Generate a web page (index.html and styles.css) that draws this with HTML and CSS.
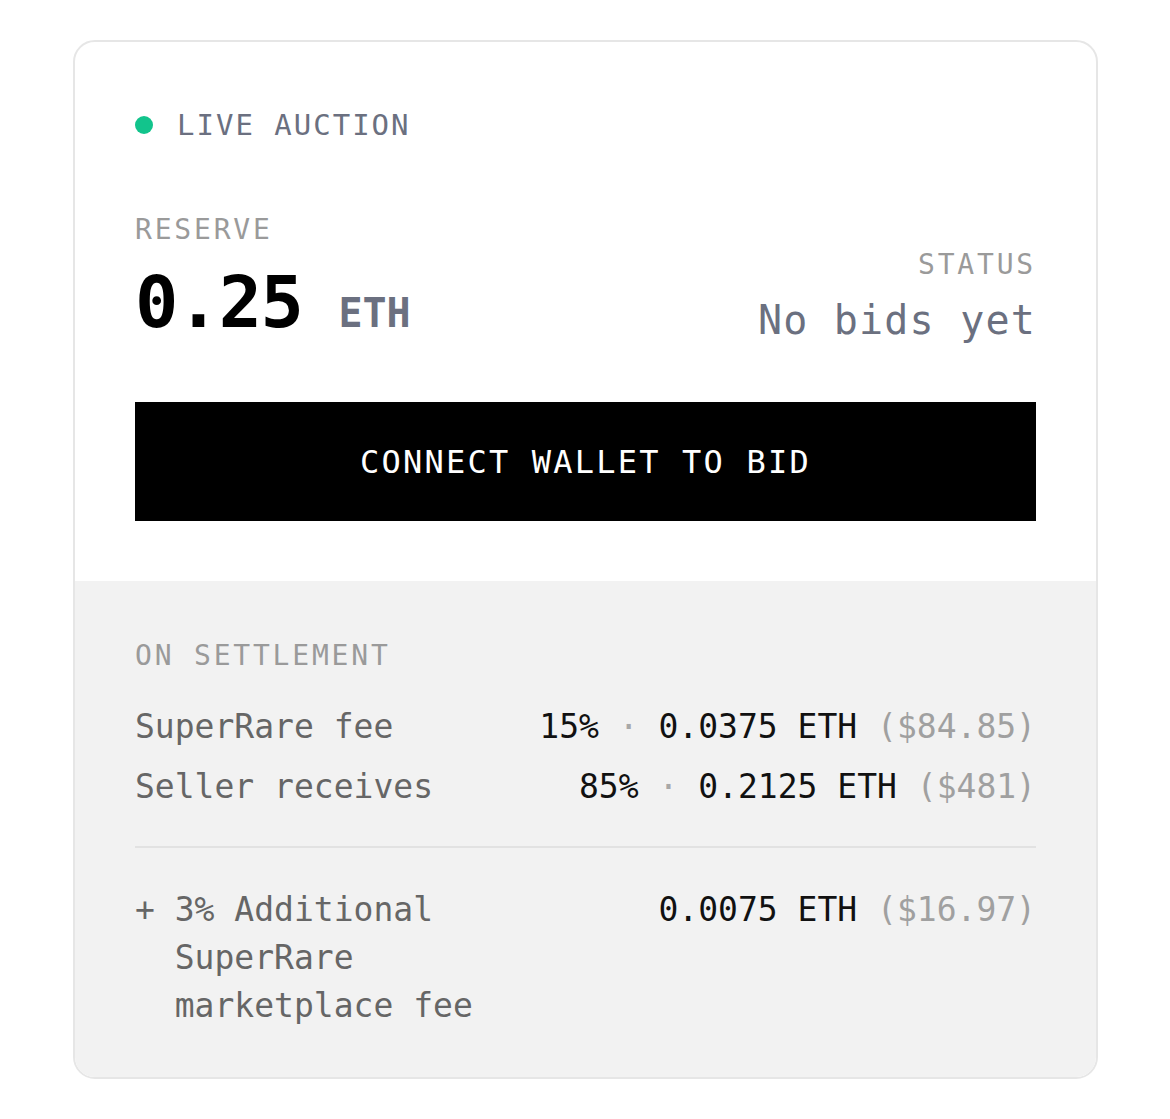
FILE: index.html
```html
<!DOCTYPE html>
<html lang="en">
<head>
<meta charset="utf-8">
<title>Live Auction</title>
<link rel="stylesheet" href="styles.css">
</head>
<body>
<div class="card">
  <section class="top">
    <div class="live"><span class="dot"></span><span>LIVE AUCTION</span></div>
    <div class="summary">
      <div class="col">
        <div class="label">RESERVE</div>
        <div class="price"><span class="amount">0.25</span><span class="unit">ETH</span></div>
      </div>
      <div class="col right">
        <div class="label">STATUS</div>
        <div class="status">No bids yet</div>
      </div>
    </div>
    <button class="bid">CONNECT WALLET TO BID</button>
  </section>
  <section class="settle">
    <div class="label">ON SETTLEMENT</div>
    <div class="rows">
      <div class="row">
        <span class="name">SuperRare fee</span>
        <span class="val">15% <span class="sep">·</span> 0.0375 ETH <span class="usd">($84.85)</span></span>
      </div>
      <div class="row">
        <span class="name">Seller receives</span>
        <span class="val">85% <span class="sep">·</span> 0.2125 ETH <span class="usd">($481)</span></span>
      </div>
    </div>
    <div class="divider"></div>
    <div class="row extra">
      <span class="name wrap">+ 3% Additional SuperRare marketplace fee</span>
      <span class="val">0.0075 ETH <span class="usd">($16.97)</span></span>
    </div>
  </section>
</div>
</body>
</html>
```
FILE: styles.css
```css
* { box-sizing: border-box; }
body {
  margin: 0;
  background: #ffffff;
  font-family: "DejaVu Sans Mono", "Liberation Mono", monospace;
}
.card {
  margin: 40px 0 0 73px;
  width: 1025px;
  border: 2px solid #e6e6e6;
  border-radius: 22px;
  overflow: hidden;
  background: #ffffff;
}
.top {
  padding: 65px 60px 60px 60px;
}
.live {
  display: flex;
  align-items: center;
  font-size: 29px;
  line-height: 36px;
  letter-spacing: 2px;
  color: #6b7080;
}
.dot {
  width: 18px;
  height: 18px;
  border-radius: 50%;
  background: #12c48c;
  margin-right: 24px;
}
.label {
  font-size: 28px;
  line-height: 36px;
  letter-spacing: 2.8px;
  color: #9a9a9a;
}
.summary {
  margin-top: 69px;
  display: flex;
  justify-content: space-between;
  align-items: flex-end;
}
.col { display: flex; flex-direction: column; }
.col.right { align-items: flex-end; margin-bottom: -2px; }
.price {
  margin-top: 14px;
  display: flex;
  align-items: baseline;
  height: 80px;
}
.amount {
  font-size: 72px;
  line-height: 80px;
  font-weight: 700;
  letter-spacing: -1.5px;
  color: #000000;
}
.unit {
  margin-left: 36px;
  font-size: 40px;
  line-height: 40px;
  font-weight: 700;
  color: #6b7080;
}
.status {
  margin-top: 13px;
  font-size: 40px;
  line-height: 48px;
  letter-spacing: 1.2px;
  color: #6b7080;
}
.bid {
  display: block;
  width: 100%;
  height: 119px;
  margin-top: 60px;
  border: 0;
  background: #000000;
  color: #ffffff;
  font-family: inherit;
  font-size: 32px;
  letter-spacing: 2.2px;
  padding: 0;
}
.settle {
  background: #f2f2f2;
  padding: 57px 60px 47px 60px;
}
.rows {
  margin-top: 29px;
  display: flex;
  flex-direction: column;
  gap: 12px;
}
.row {
  display: flex;
  justify-content: space-between;
  align-items: flex-start;
  font-size: 33px;
  line-height: 48px;
}
.name { color: #666666; }
.val { color: #111111; white-space: nowrap; }
.sep { color: #a8a8a8; }
.usd { color: #a0a0a0; }
.divider {
  margin-top: 35px;
  height: 2px;
  background: #e2e2e2;
}
.extra { margin-top: 38px; }
.wrap {
  width: 18ch;
  padding-left: 2ch;
  text-indent: -2ch;
}
```
